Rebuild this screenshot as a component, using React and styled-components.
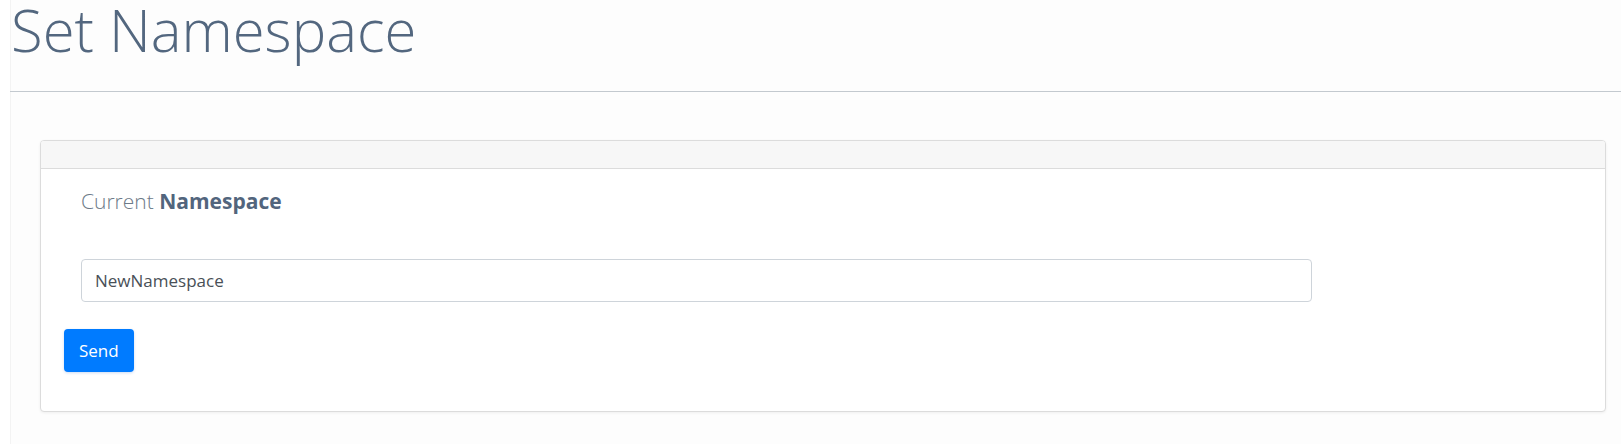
import React, { useState } from 'react'
import styled, { createGlobalStyle } from 'styled-components'

const GlobalStyle = createGlobalStyle`
    body {
        margin: 0;
        background: #ffffff;
        font-family: "Open Sans", "Noto Sans", sans-serif;
    }
`

const Main = styled.div`
    margin-left: 10px;
    min-height: 444px;
    background: #fdfdfd;
    border-left: 1px solid #f3f3f3;
    box-sizing: border-box;
`

const Title = styled.h1`
    margin: 0;
    font-size: 58px;
    font-weight: 300;
    line-height: 60px;
    color: #53677f;
`

const Rule = styled.hr`
    margin: 31px 0 0 -1px;
    border: 0;
    border-top: 1px solid #c3c9cf;
`

const Card = styled.div`
    margin: 48px 15px 0 29px;
    background: #ffffff;
    border: 1px solid #dcdcdc;
    border-radius: 4px;
    box-shadow: 0 1px 3px rgba(0, 0, 0, 0.06);
    overflow: hidden;
`

const CardHeader = styled.div`
    height: 27px;
    background: #f7f7f7;
    border-bottom: 1px solid #dcdcdc;
`

const CardBody = styled.div`
    padding: 17px 24px 39px 23px;
`

const Heading = styled.div`
    padding-left: 17px;
    font-size: 21px;
    line-height: 31px;
    color: #6d7a88;
    font-weight: 300;

    b {
        font-weight: 700;
        color: #52657d;
    }
`

const Field = styled.div`
    padding: 42px 0 0 17px;
`

const Input = styled.input`
    display: block;
    width: 1231px;
    height: 43px;
    box-sizing: border-box;
    padding: 0 13px;
    font-family: "Open Sans", "Noto Sans", sans-serif;
    font-size: 17px;
    color: #495057;
    background: #ffffff;
    border: 1px solid #ced4da;
    border-radius: 4px;
    outline: none;
`

const Button = styled.button`
    display: block;
    margin-top: 27px;
    height: 43px;
    padding: 0 15px;
    font-family: "Open Sans", "Noto Sans", sans-serif;
    font-size: 17px;
    color: #ffffff;
    background: #007bff;
    border: 0;
    border-radius: 4px;
    box-shadow: 0 1px 3px rgba(0, 80, 200, 0.2);
    cursor: pointer;
`

const App = () => {
    let [namespace, setNamespace] = useState('NewNamespace')

    const handleChangeNamespace = (event) => {
        setNamespace(event.target.value)
    }

    return (
        <>
            <GlobalStyle />
            <Main>
                <Title>Set Namespace</Title>
                <Rule />
                <Card>
                    <CardHeader />
                    <CardBody>
                        <Heading>
                            Current <b>Namespace</b>
                        </Heading>
                        <Field>
                            <Input
                                type="text"
                                value={namespace}
                                onChange={handleChangeNamespace}
                            />
                        </Field>
                        <Button>Send</Button>
                    </CardBody>
                </Card>
            </Main>
        </>
    )
}

export default App
